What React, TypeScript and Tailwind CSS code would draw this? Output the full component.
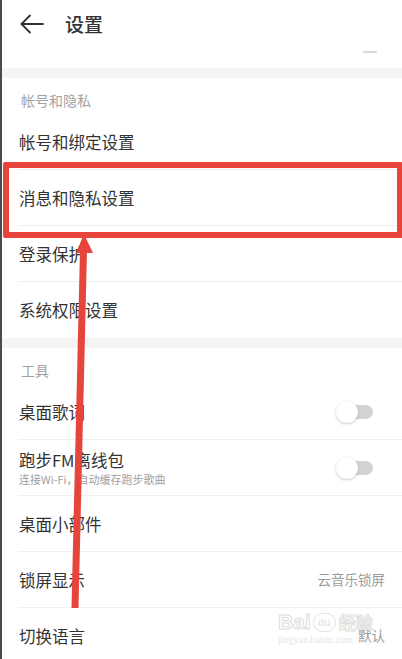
import React from 'react';

const font = { fontFamily: '"Noto Sans CJK SC", "Noto Sans", sans-serif' };

function Toggle() {
  return (
    <div className="relative w-[37px] h-[22px]">
      <div className="absolute right-0 top-[4px] w-[30px] h-[14px] rounded-full bg-[#d4d4d4]" />
      <div className="absolute left-0 top-0 w-[22px] h-[22px] rounded-full bg-white shadow-[0_1px_3px_rgba(0,0,0,0.22)]" />
    </div>
  );
}

function SectionTitle({ title }: { title: string }) {
  return (
    <div className="h-[36px] pl-[19px] pt-[14px] text-[14px] leading-[16px] text-[#a3a3a3]">{title}</div>
  );
}

interface RowProps {
  title: string;
  sub?: string;
  value?: string;
  toggle?: boolean;
  divider?: boolean;
}

function Row({ title, sub, value, toggle, divider = true }: RowProps) {
  return (
    <div className="pl-[16px]">
      <div
        className={`h-[56px] flex items-center justify-between pl-[1px] ${toggle ? 'pr-[29px]' : 'pr-[17px]'} ${
          divider ? 'border-b border-[#efefef]' : ''
        }`}
      >
        <div className="flex flex-col">
          <span className="text-[16.5px] leading-[22px] text-[#333333]">{title}</span>
          {sub && <span className="text-[11px] leading-[15px] text-[#a0a0a0] mt-[1px]">{sub}</span>}
        </div>
        {value && <span className="text-[13.5px] text-[#9a9a9a]">{value}</span>}
        {toggle && <Toggle />}
      </div>
    </div>
  );
}

export default function App() {
  return (
    <div style={font} className="relative w-[402px] h-[659px] overflow-hidden bg-white border-l-2 border-[#4a4a4a]">
      {/* Header */}
      <header className="h-[48px] flex items-center pl-[18px]">
        <svg width="24" height="20" viewBox="0 0 24 20" fill="none" stroke="#333" strokeWidth="1.8" strokeLinecap="round" strokeLinejoin="round">
          <path d="M23 10H1.5" />
          <path d="M10 1.5L1.5 10L10 18.5" />
        </svg>
        <h1 className="ml-[21px] text-[19px] font-medium text-[#333333]">设置</h1>
      </header>
      <div className="h-[20px] flex justify-end pr-[25px] pt-[3px]">
        <div className="w-[14px] h-[2px] rounded-full bg-[#d8d8d8]" />
      </div>
      <div className="h-[10px] bg-[#f4f4f4]" />

      <SectionTitle title="帐号和隐私" />
      <Row title="帐号和绑定设置" />
      <Row title="消息和隐私设置" />
      <Row title="登录保护" />
      <Row title="系统权限设置" divider={false} />

      <div className="h-[10px] bg-[#f4f4f4]" />

      <SectionTitle title="工具" />
      <Row title="桌面歌词" toggle />
      <Row title="跑步FM离线包" sub="连接Wi-Fi，自动缓存跑步歌曲" toggle />
      <Row title="桌面小部件" />
      <Row title="锁屏显示" value="云音乐锁屏" />
      <Row title="切换语言" value="默认" />

      {/* Highlight box */}
      <div className="absolute left-[1px] top-[162px] w-[400px] h-[76px] border-[6px] border-[#e8443a] rounded-[2px]" />

      {/* Arrow */}
      <svg className="absolute left-[-2px] top-0" width="402" height="659" viewBox="0 0 402 659">
        <path d="M75 608 L83.5 250" stroke="#e5453b" strokeWidth="7" />
        <polygon points="84,234 93,253 76,253" fill="#e5453b" />
      </svg>

      {/* Watermark */}
      <div className="absolute left-[276px] top-[610px] flex flex-col items-start opacity-60 pointer-events-none">
        <div className="flex items-center">
          <span className="text-[21px] leading-[24px] font-bold text-transparent [-webkit-text-stroke:1px_#c9c9c9]" style={{ fontFamily: '"Liberation Sans", sans-serif' }}>
            Bai
          </span>
          <span className="ml-[2px] w-[23px] h-[19px] rounded-full border border-[#cfcfcf] text-[11px] leading-[17px] text-center text-[#cfcfcf]" style={{ fontFamily: '"Liberation Sans", sans-serif' }}>
            du
          </span>
          <span className="ml-[3px] text-[17px] leading-[22px] font-bold text-transparent [-webkit-text-stroke:1px_#c9c9c9]">经验</span>
        </div>
        <span className="text-[10px] leading-[12px] text-[#d6d6d6]" style={{ fontFamily: '"Liberation Serif", serif' }}>
          jingyan.baidu.com
        </span>
      </div>
    </div>
  );
}
